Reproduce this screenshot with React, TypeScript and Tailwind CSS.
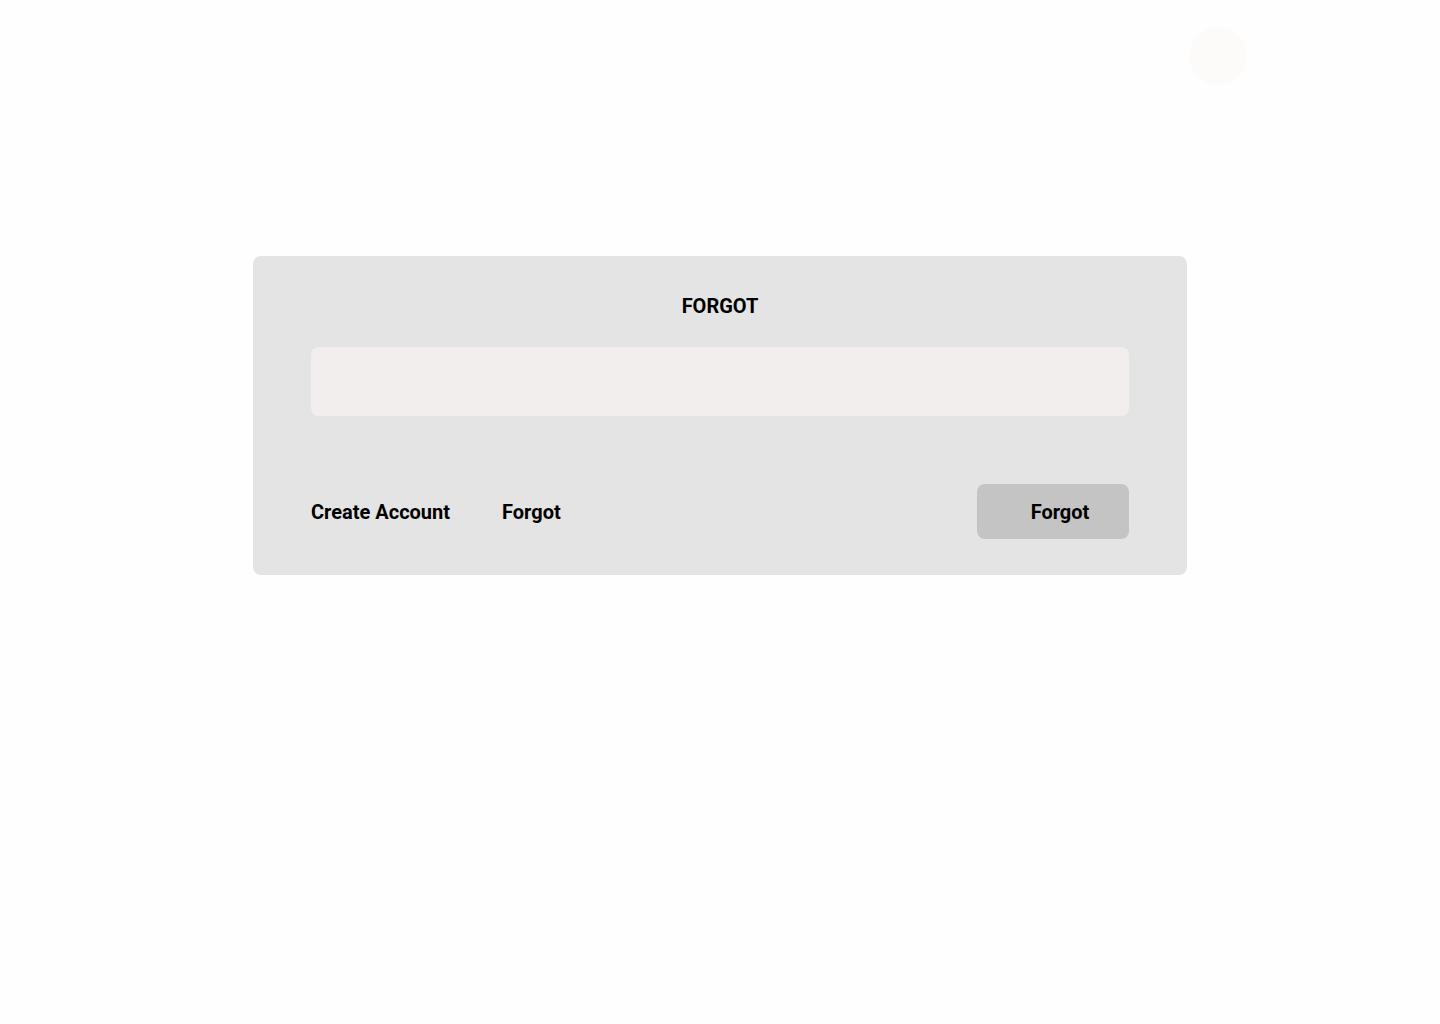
export default function App() {
  return (
    <div className="min-h-[1024px] w-full bg-[#fefefe] font-['Roboto',sans-serif] text-black">
      <div className="flex justify-end pr-[193px] pt-[27px]">
        <div className="h-[58px] w-[58px] rounded-full bg-[#fdfafa]" />
      </div>
      <div className="mt-[171px] flex justify-center">
        <div className="w-[934px] rounded-lg bg-[#e4e4e4] px-[58px] pt-[36px] pb-[36px]">
          <h1 className="text-center text-xl leading-7 font-bold">FORGOT</h1>
          <input
            type="text"
            className="mt-[27px] block h-[69px] w-full rounded-lg bg-[#f2eeed] px-4 outline-none"
          />
          <div className="mt-[68px] flex items-center justify-between">
            <div className="flex items-center gap-[52px] text-xl font-bold">
              <a href="#">Create Account</a>
              <a href="#">Forgot</a>
            </div>
            <button className="h-[55px] w-[152px] rounded-lg bg-[#c4c4c4] pl-[14px] text-xl font-bold">
              Forgot
            </button>
          </div>
        </div>
      </div>
    </div>
  );
}
